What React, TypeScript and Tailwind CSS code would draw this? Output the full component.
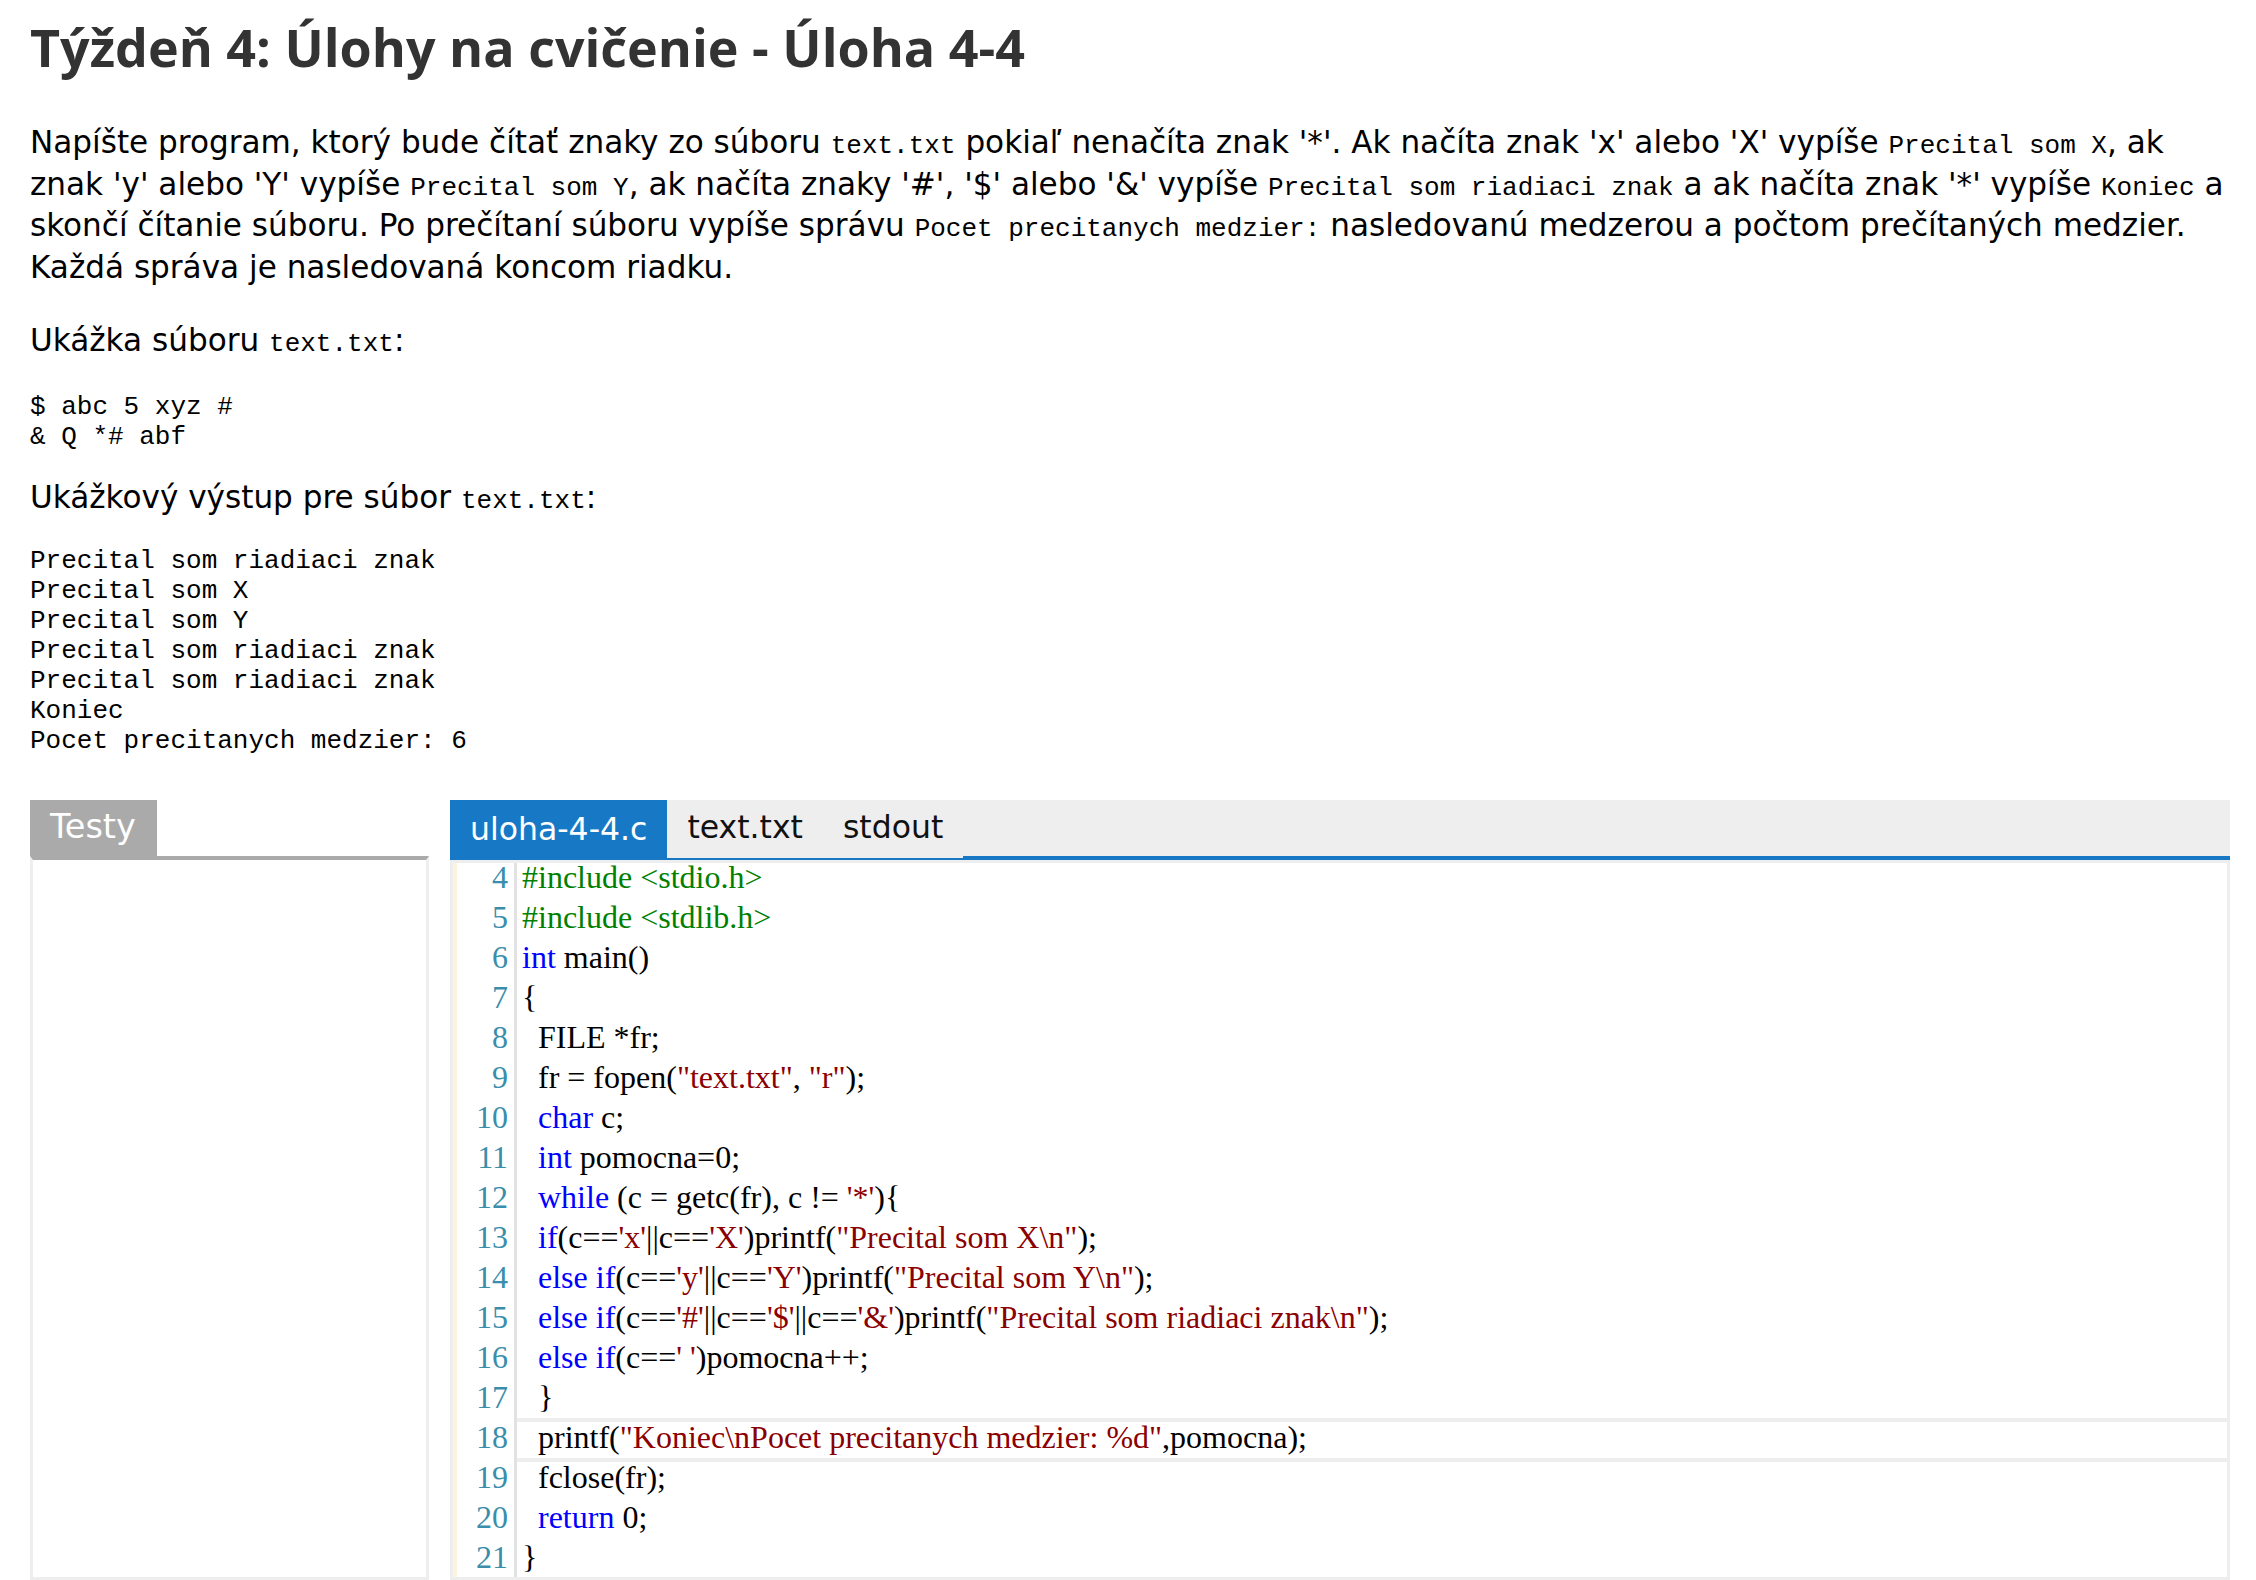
import React from "react";

type Tok = [string, string?];

const KW = "text-[#0000ff]";
const STR = "text-[#8b0000]";
const PRE = "text-[#008000]";

const codeLines: { n: number; toks: Tok[]; active?: boolean }[] = [
  { n: 4, toks: [["#include <stdio.h>", PRE]] },
  { n: 5, toks: [["#include <stdlib.h>", PRE]] },
  { n: 6, toks: [["int", KW], [" main()"]] },
  { n: 7, toks: [["{"]] },
  { n: 8, toks: [["  FILE *fr;"]] },
  { n: 9, toks: [["  fr = fopen("], ['"text.txt"', STR], [", "], ['"r"', STR], [");"]] },
  { n: 10, toks: [["  "], ["char", KW], [" c;"]] },
  { n: 11, toks: [["  "], ["int", KW], [" pomocna=0;"]] },
  { n: 12, toks: [["  "], ["while", KW], [" (c = getc(fr), c != "], ["'*'", STR], ["){"]] },
  {
    n: 13,
    toks: [["  "], ["if", KW], ["(c=="], ["'x'", STR], ["||c=="], ["'X'", STR], [")printf("], ['"Precital som X\\n"', STR], [");"]],
  },
  {
    n: 14,
    toks: [["  "], ["else if", KW], ["(c=="], ["'y'", STR], ["||c=="], ["'Y'", STR], [")printf("], ['"Precital som Y\\n"', STR], [");"]],
  },
  {
    n: 15,
    toks: [
      ["  "],
      ["else if", KW],
      ["(c=="],
      ["'#'", STR],
      ["||c=="],
      ["'$'", STR],
      ["||c=="],
      ["'&'", STR],
      [")printf("],
      ['"Precital som riadiaci znak\\n"', STR],
      [");"],
    ],
  },
  { n: 16, toks: [["  "], ["else if", KW], ["(c=="], ["' '", STR], [")pomocna++;"]] },
  { n: 17, toks: [["  }"]] },
  { n: 18, toks: [["  printf("], ['"Koniec\\nPocet precitanych medzier: %d"', STR], [",pomocna);"]], active: true },
  { n: 19, toks: [["  fclose(fr);"]] },
  { n: 20, toks: [["  "], ["return", KW], [" 0;"]] },
  { n: 21, toks: [["}"]] },
];

function Code({ children }: { children: React.ReactNode }) {
  return <code className="font-['Liberation_Mono',monospace] text-[26px] leading-none">{children}</code>;
}

export default function App() {
  return (
    <div className="bg-white px-[30px] pr-[26px] pt-[16px] text-black font-['DejaVu_Sans',sans-serif]">
      {/* Title */}
      <h2 className="font-['Open_Sans',sans-serif] font-bold text-[52px] leading-[62px] text-[#333333]">
        Týždeň 4: Úlohy na cvičenie - Úloha 4-4
      </h2>

      {/* Zadanie */}
      <p className="mt-[44px] text-[31.1px] leading-[41.6px]">
        Napíšte program, ktorý bude čítať znaky zo súboru <Code>text.txt</Code> pokiaľ nenačíta znak '*'. Ak načíta
        znak 'x' alebo 'X' vypíše <Code>Precital som X</Code>, ak
        <br />
        znak 'y' alebo 'Y' vypíše <Code>Precital som Y</Code>, ak načíta znaky '#', '$' alebo '&amp;' vypíše{" "}
        <Code>Precital som riadiaci znak</Code> a ak načíta znak '*' vypíše <Code>Koniec</Code> a
        <br />
        skončí čítanie súboru. Po prečítaní súboru vypíše správu <Code>Pocet precitanych medzier:</Code> nasledovanú
        medzerou a počtom prečítaných medzier.
        <br />
        Každá správa je nasledovaná koncom riadku.
      </p>

      <p className="mt-[32px] text-[31.1px] leading-[41.6px]">
        Ukážka súboru <Code>text.txt</Code>:
      </p>
      <pre className="mt-[30px] font-['Liberation_Mono',monospace] text-[26px] leading-[30px]">
        {"$ abc 5 xyz #\n& Q *# abf"}
      </pre>

      <p className="mt-[25px] text-[31.1px] leading-[41.6px]">
        Ukážkový výstup pre súbor <Code>text.txt</Code>:
      </p>
      <pre className="mt-[27px] font-['Liberation_Mono',monospace] text-[26px] leading-[30px]">
        {
          "Precital som riadiaci znak\nPrecital som X\nPrecital som Y\nPrecital som riadiaci znak\nPrecital som riadiaci znak\nKoniec\nPocet precitanych medzier: 6"
        }
      </pre>

      {/* Panels */}
      <div className="mt-[44px] flex gap-[21px]">
        {/* Testy */}
        <div className="flex w-[399px] flex-col">
          <div className="flex">
            <div className="flex h-[56px] w-[127px] items-center bg-[#aaaaaa] pl-[20px] text-[33.5px] text-white">
              Testy
            </div>
          </div>
          <div className="flex-1 border-x-[3px] border-b-[3px] border-t-4 border-x-[#eeeeee] border-b-[#eeeeee] border-t-[#aaaaaa]" />
        </div>

        {/* Editor */}
        <div className="flex w-[1780px] flex-col">
          <div className="flex h-[60px] items-start border-b-4 border-[#1779c6] bg-[#eeeeee] text-[31.5px]">
            <div className="mb-[-4px] flex h-[60px] items-center bg-[#1779c6] px-[20px] text-white">uloha-4-4.c</div>
            <div className="mb-[-2px] flex h-[58px] items-center bg-[#eeeeee] px-[20px] pb-[2px] text-[#111111]">
              text.txt
            </div>
            <div className="mb-[-2px] flex h-[58px] items-center bg-[#eeeeee] px-[20px] pb-[2px] text-[#111111]">
              stdout
            </div>
          </div>

          <div className="flex h-[720px] overflow-hidden border-[3px] border-[#eeeeee] bg-white font-['Liberation_Serif',serif] text-[32px] leading-[40px]">
            <div className="w-[4px] shrink-0 bg-[#fcf4e0]" />
            <div className="-mt-[6px] w-[57px] shrink-0 pr-[6px] text-right text-[#3a8eab]">
              {codeLines.map((l) => (
                <div key={l.n} className="h-[40px]">
                  {l.n}
                </div>
              ))}
            </div>
            <div className="w-[3px] shrink-0 bg-[#e2e2e2]" />
            <div className="-mt-[6px] flex-1">
              {codeLines.map((l) => (
                <div key={l.n} className="relative h-[40px] whitespace-pre pl-[5px]">
                  {l.active && (
                    <div className="pointer-events-none absolute left-0 right-0 top-[1px] h-[44px] border-y-4 border-[#eeeeee]" />
                  )}
                  {l.toks.map(([t, c], i) => (
                    <span key={i} className={c}>
                      {t}
                    </span>
                  ))}
                </div>
              ))}
            </div>
          </div>
        </div>
      </div>
    </div>
  );
}
